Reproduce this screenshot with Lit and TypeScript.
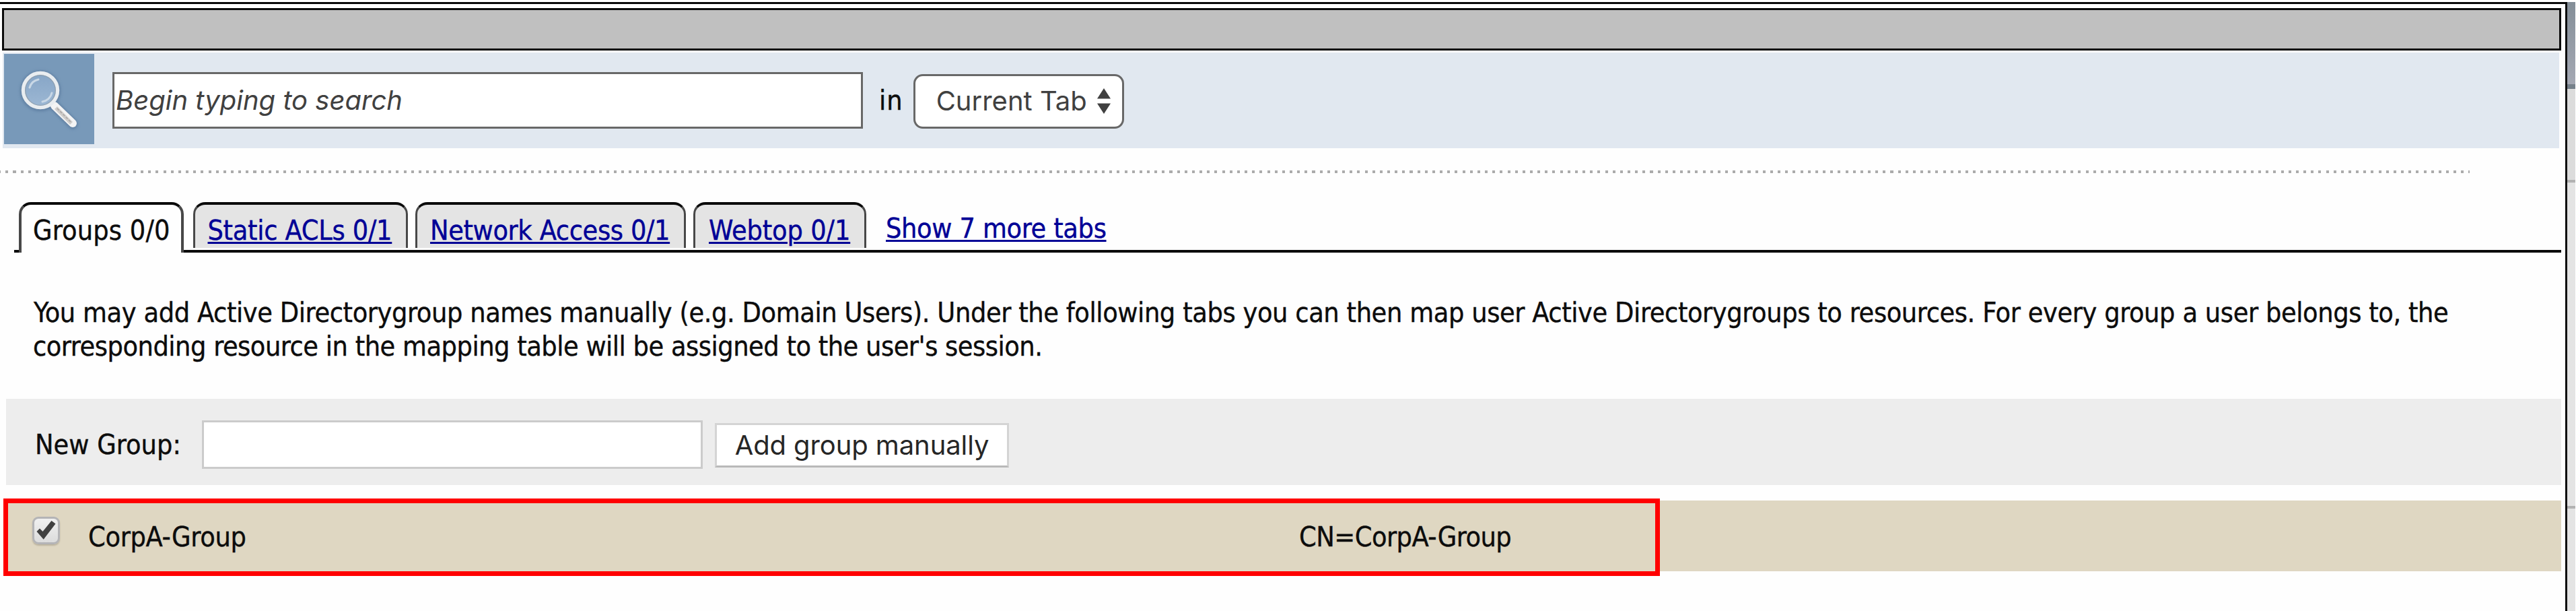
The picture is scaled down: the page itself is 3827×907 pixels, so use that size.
import { LitElement, html, css, svg } from 'lit';
import { customElement, state } from 'lit/decorators.js';
import { classMap } from 'lit/directives/class-map.js';

interface Tab {
  id: string;
  label: string;
}

const TABS: Tab[] = [
  { id: 'groups', label: 'Groups 0/0' },
  { id: 'acls', label: 'Static ACLs 0/1' },
  { id: 'network', label: 'Network Access 0/1' },
  { id: 'webtop', label: 'Webtop 0/1' },
];

const magnifier = svg`
  <defs>
    <linearGradient id="lens" x1="0" y1="0" x2="0" y2="1">
      <stop offset="0" stop-color="#86a5c6" />
      <stop offset="1" stop-color="#9db8d4" />
    </linearGradient>
    <filter id="soft" x="-20%" y="-20%" width="140%" height="140%">
      <feGaussianBlur stdDeviation="2.2" />
    </filter>
  </defs>
  <g filter="url(#soft)" fill="none" stroke="#56779b" stroke-opacity=".75" stroke-linecap="round">
    <circle cx="54" cy="55" r="26" stroke-width="8" />
    <path d="M75 77 L102 104" stroke-width="15" />
  </g>
  <path d="M75 77 L102 103" stroke="#f4f4f4" stroke-width="12" stroke-linecap="round" />
  <path d="M77 80 L100 103" stroke="#cfcdcb" stroke-width="5.5" />
  <path d="M79 81 L99 101" stroke="#aaa6a4" stroke-width="1.5" stroke-dasharray="4 2" />
  <circle cx="54" cy="54" r="25.5" fill="url(#lens)" stroke="#e9edf0" stroke-width="5.5" />
  <circle cx="54" cy="54" r="22.4" fill="none" stroke="#8795a3" stroke-opacity=".7" stroke-width="1.3" />
  <path d="M38 50 A17 17 0 0 1 51 38" fill="none" stroke="#c9d8e6" stroke-width="3" stroke-linecap="round" />
  <path d="M71 58 A17 17 0 0 1 57 71" fill="none" stroke="#c9d8e6" stroke-width="3" stroke-linecap="round" />
`;

@customElement('app-root')
export class AppRoot extends LitElement {
  @state() private active = 'groups';

  static styles = css`
    :host {
      display: flex;
      box-sizing: border-box;
      width: 3827px;
      height: 907px;
      padding-top: 3px;
      overflow: hidden;
      background: #fff;
      color: #0c0c0c;
      font: 41px 'DejaVu Sans Condensed', 'DejaVu Sans', sans-serif;
      font-stretch: condensed;
      white-space: nowrap;
      -webkit-text-stroke: 0.4px currentColor;
    }
    * { box-sizing: border-box; }
    .panel {
      width: 3814px;
      flex: none;
      border-top: 3px solid #0a0a0a;
      border-right: 3px solid #0a0a0a;
      background: #fefefe;
    }
    .edge {
      display: flex;
      flex-direction: column;
      width: 13px;
      padding-right: 1px;
    }
    .edge-head {
      height: 129px;
      background: linear-gradient(#848e98, #a4a8b3);
      border-bottom: 7px solid #75808a;
    }
    .edge-cell { background: #dcdcdc; border-bottom: 4px solid #b2b2b2; }
    .cell-a { height: 139px; }
    .cell-b { height: 484px; background: #e4e4e4; }
    .cell-c { flex: 1; border: 0; background: #e4e4e4; }

    .bar {
      width: 3802px;
      height: 63px;
      margin: 6px 0 0 3px;
      border: 3px solid #0a0a0a;
      background: #c0c0c0;
    }
    .search {
      display: flex;
      align-items: flex-start;
      width: 3798px;
      height: 142px;
      margin: 3px 0 0 4px;
      padding: 2px 0 0 2px;
      background: #e1e8f0;
    }
    .icon { width: 134px; height: 134px; background: #7899b9; }
    .icon svg { display: block; width: 134px; height: 134px; }
    .query {
      width: 1115px;
      height: 84px;
      margin: 27px 0 0 27px;
      padding-left: 2px;
      border: 3px solid #686868;
      background: #fff;
      color: #404040;
      font: italic 40px/77px Inter, sans-serif;
    }
    .in { margin-left: 24px; line-height: 138px; letter-spacing: 1px; }
    .scope {
      display: flex;
      align-items: center;
      width: 313px;
      height: 81px;
      margin: 30px 0 0 15px;
      padding: 0 17px 2px 31px;
      justify-content: space-between;
      border: 3px solid #686868;
      border-radius: 14px;
      background: #fff;
      color: #404040;
      font: 40px/74px Inter, sans-serif;
    }
    .scope svg { width: 20px; height: 38px; }
    .query, .scope, .button { -webkit-text-stroke: 0; }
    .dots {
      width: 3669px;
      height: 4px;
      margin-top: 33px;
      background: repeating-linear-gradient(90deg, #ababab 0 1.2px, transparent 1.2px 8.3px, #ababab 8.3px 11.156px);
    }

    .tabs {
      display: flex;
      align-items: flex-start;
      width: 3784px;
      height: 75px;
      margin: 43px 0 0 21px;
      padding-left: 7px;
      border-bottom: 4px solid #0a0a0a;
    }
    .tab {
      height: 68px;
      border: solid #484848;
      border-width: 4px 3px 0;
      border-top-color: #0a0a0a;
      border-radius: 18px 18px 0 0;
      background: #e4e4e4;
      line-height: 77px;
    }
    .tab.active {
      height: 75px;
      border-left-width: 4px;
      border-right-width: 4px;
      background: #fefefe;
    }
    .groups { width: 245px; padding-left: 17px; letter-spacing: 0.1px; }
    .acls { width: 319px; margin-left: 14px; padding-left: 18.5px; letter-spacing: -0.3px; }
    .network { width: 402px; margin-left: 11px; padding-left: 19px; letter-spacing: -0.38px; }
    .webtop { width: 257px; margin-left: 11px; padding-left: 20px; letter-spacing: -0.15px; }
    .link {
      color: #000096;
      text-decoration: underline;
      text-decoration-thickness: 3px;
      text-underline-offset: 3px;
    }
    .more { margin-left: 29px; line-height: 78px; letter-spacing: -0.36px; }

    .help { margin: 64px 0 0 50px; line-height: 50.3px; }
    .line { display: block; letter-spacing: -0.416px; }
    .line.second { margin-left: -1px; letter-spacing: -0.49px; }

    .add {
      display: flex;
      align-items: flex-start;
      width: 3796px;
      height: 128px;
      margin: 52px 0 0 9px;
      padding-left: 43px;
      background: #ededed;
    }
    .label { width: 248px; line-height: 137px; }
    .field {
      width: 744px;
      height: 72px;
      margin-top: 32px;
      border: 3px solid #cbcbcb;
      background: #fff;
    }
    .button {
      width: 437px;
      height: 66px;
      margin: 36px 0 0 18px;
      border: solid #d4d4d4;
      border-width: 3px;
      border-bottom-color: #b9b9b9;
      background: #fff;
      color: #262626;
      font: 40px/60px Inter, sans-serif;
      letter-spacing: -0.1px;
      text-align: center;
    }
    .row {
      position: relative;
      display: flex;
      align-items: flex-start;
      width: 3796px;
      height: 105px;
      margin: 23px 0 0 9px;
      padding-left: 39px;
      background: #dfd7c2;
      line-height: 109px;
    }
    .check {
      flex: none;
      width: 41px;
      height: 41px;
      margin-top: 24px;
      border: 3px solid #b4b4b6;
      border-radius: 9px;
      background: linear-gradient(#f0f0f0, #dcdcdc);
      box-shadow: 0 2px 2px rgba(120, 110, 90, 0.35);
    }
    .check svg { display: block; width: 35px; height: 35px; overflow: visible; }
    .name { width: 1799px; margin-left: 42px; letter-spacing: -0.33px; }
    .dn { letter-spacing: -0.52px; }
    .mark {
      position: absolute;
      left: -4px;
      top: -3px;
      width: 2461px;
      height: 115px;
      border: 7px solid #f00;
    }
  `;

  private renderTab(tab: Tab) {
    const on = tab.id === this.active;
    return html`<div
      class=${classMap({ tab: true, active: on, [tab.id]: true })}
      @click=${() => (this.active = tab.id)}
    >${on ? tab.label : html`<a class="link">${tab.label}</a>`}</div>`;
  }

  render() {
    return html`
      <main class="panel">
        <div class="bar"></div>
        <section class="search">
          <div class="icon"><svg viewBox="0 0 134 134">${magnifier}</svg></div>
          <div class="query">Begin typing to search</div>
          <span class="in">in</span>
          <div class="scope">
            Current Tab
            <svg viewBox="0 0 20 38"><path d="M10 0 L20 15.5 H0 Z M10 38 L0 22.5 H20 Z" fill="#404040" /></svg>
          </div>
        </section>
        <div class="dots"></div>
        <nav class="tabs">
          ${TABS.map((t) => this.renderTab(t))}
          <a class="link more">Show 7 more tabs</a>
        </nav>
        <p class="help">
          <span class="line">You may add Active Directorygroup names manually (e.g. Domain Users). Under the following tabs you can then map user Active Directorygroups to resources. For every group a user belongs to, the</span>
          <span class="line second">corresponding resource in the mapping table will be assigned to the user's session.</span>
        </p>
        <section class="add">
          <span class="label">New Group:</span>
          <div class="field"></div>
          <div class="button">Add group manually</div>
        </section>
        <section class="row">
          <div class="check">
            <svg viewBox="3 3 35 35"><path d="M6.5 22 L11 17.5 L15.5 22 L28.5 6 L34.5 10.5 L16.7 33.7 Z" fill="#404040" /></svg>
          </div>
          <span class="name">CorpA-Group</span>
          <span class="dn">CN=CorpA-Group</span>
          <div class="mark"></div>
        </section>
      </main>
      <aside class="edge">
        <div class="edge-head"></div>
        <div class="edge-cell cell-a"></div>
        <div class="edge-cell cell-b"></div>
        <div class="edge-cell cell-c"></div>
      </aside>
    `;
  }
}
